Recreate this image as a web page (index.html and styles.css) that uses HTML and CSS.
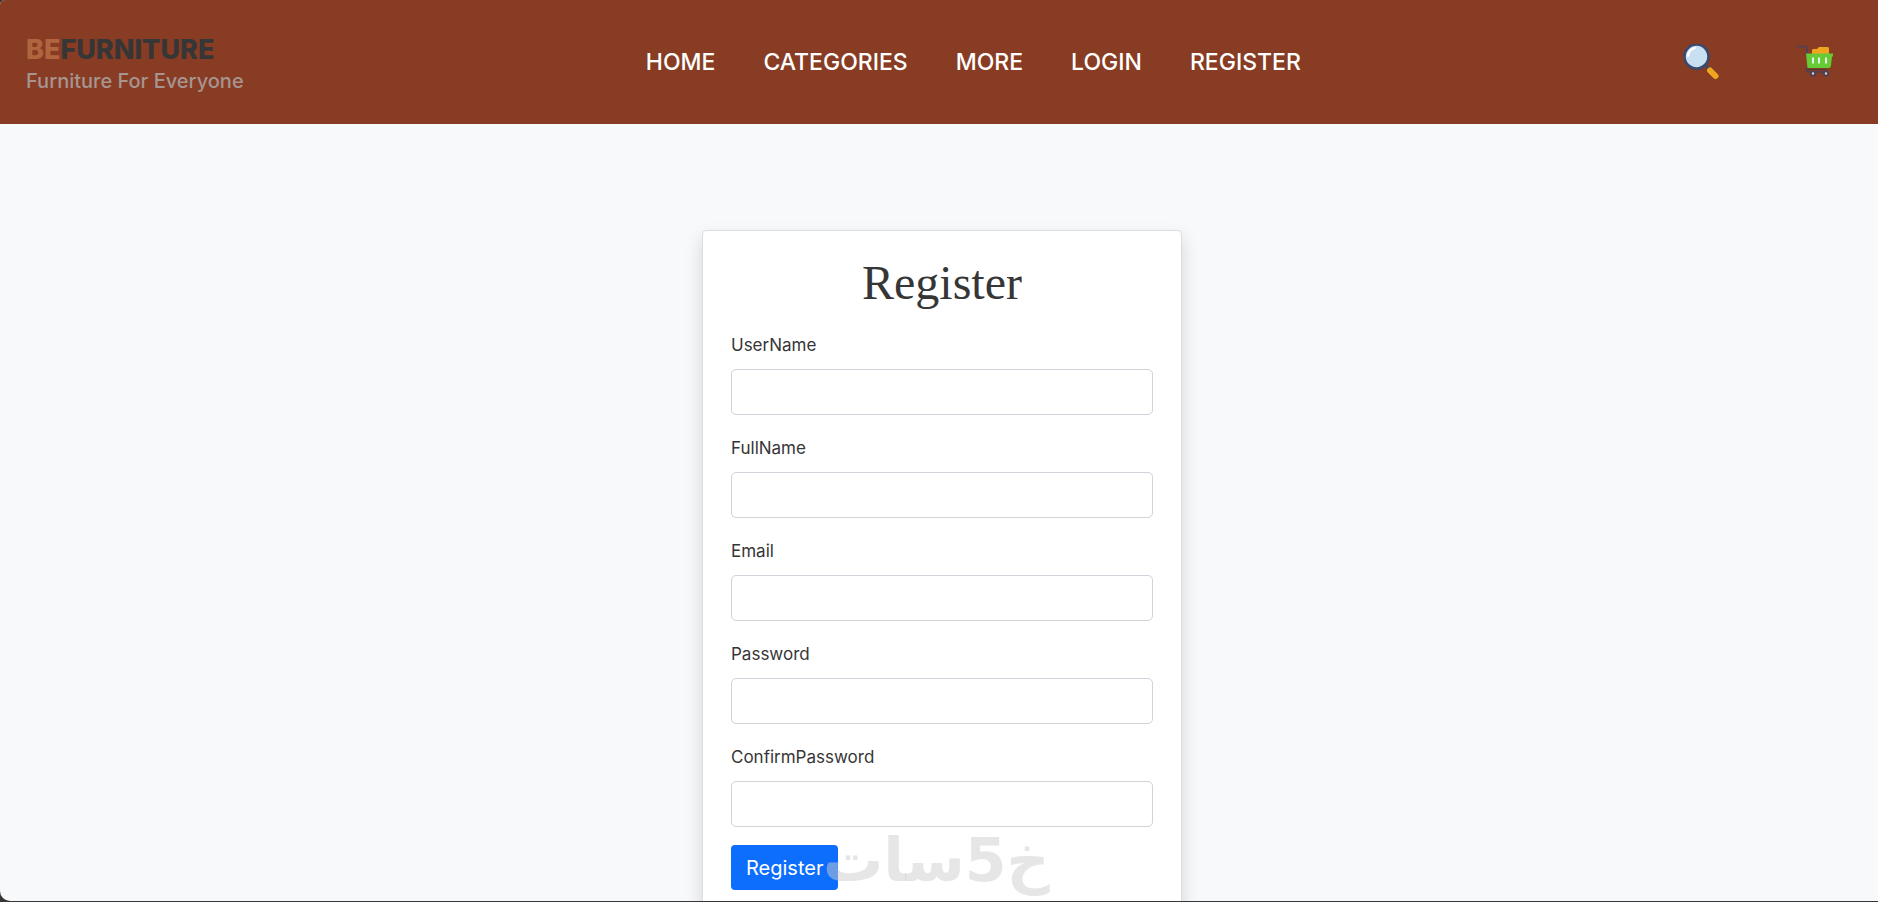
FILE: index.html
```html
<!DOCTYPE html>
<html lang="en">
<head>
  <meta charset="UTF-8">
  <meta name="viewport" content="width=device-width, initial-scale=1.0">
  <title>BEFURNITURE - Register</title>
  <link rel="stylesheet" href="styles.css">
</head>
<body>

<div class="page">
  <header class="header">
    <a class="brand" href="#">
      <span class="brand-name"><span class="brand-be">BE</span>FURNITURE</span>
      <span class="brand-tagline">Furniture For Everyone</span>
    </a>

    <nav class="menu">
      <a href="#">HOME</a>
      <a href="#">CATEGORIES</a>
      <a href="#">MORE</a>
      <a href="#">LOGIN</a>
      <a href="#">REGISTER</a>
    </nav>

    <div class="header-icons">
      <button type="button" class="icon-btn" aria-label="Search">
        <svg width="36" height="36" viewBox="0 0 36 36">
          <path d="M22 21l4 4" stroke="#3b4a6b" stroke-width="3"/>
          <path d="M27 26.500l5.500 5.500" stroke="#f0a51f" stroke-width="6" stroke-linecap="round"/>
          <circle cx="13.500" cy="12.500" r="12" fill="#c9dff2" stroke="#3b4a6b" stroke-width="2.600"/>
          <path d="M5 12a9 9 0 0 1 7-8" fill="none" stroke="#fff" stroke-width="2.200" stroke-linecap="round"/>
        </svg>
      </button>
      <button type="button" class="icon-btn" aria-label="Cart">
        <svg width="36" height="36" viewBox="0 0 36 36">
          <path d="M0 2.500h7.500q2 0 2.300 2V10M9.500 24v2q0 2 2.500 2h8" fill="none" stroke="#45455c" stroke-width="1.600"/>
          <path d="M15 10V6l1-1h4l2-2h9l1 1v6z" fill="#f0a51f"/>
          <path d="M9 9.500h27v3h-1l-1 9q-.3 2.500-2.500 2.500H10.500z" fill="#65cc35"/>
          <path d="M16 13.500v6M22 13.500v6M29 13.500v6" stroke="#e8f0e8" stroke-width="2"/>
          <path d="M10 25.500h20" stroke="#5c392f" stroke-width="1.500"/>
          <path d="M18 28h12" stroke="#57404a" stroke-width="2"/>
          <circle cx="16" cy="29.500" r="2.200" fill="#d9d4dc" stroke="#50404f" stroke-width="2"/>
          <circle cx="29" cy="29.500" r="2.200" fill="#d9d4dc" stroke="#50404f" stroke-width="2"/>
        </svg>
      </button>
    </div>
  </header>

  <main class="content">
    <div class="card">
      <h1 class="title">Register</h1>
      <form>
        <div class="field">
          <label for="userName">UserName</label>
          <input type="text" id="userName">
        </div>
        <div class="field">
          <label for="fullName">FullName</label>
          <input type="text" id="fullName">
        </div>
        <div class="field">
          <label for="email">Email</label>
          <input type="email" id="email">
        </div>
        <div class="field">
          <label for="password">Password</label>
          <input type="password" id="password">
        </div>
        <div class="field">
          <label for="confirmPassword">ConfirmPassword</label>
          <input type="password" id="confirmPassword">
        </div>
        <button type="submit" class="register-btn">Register</button>
      </form>
    </div>
  </main>

  <div class="watermark" lang="ar" dir="rtl">خ5سات</div>
</div>

</body>
</html>
```

FILE: styles.css
```css
* {
  box-sizing: border-box;
}

body {
  margin: 0;
  background-color: #363636;
  color: #363636;
  font-family: Inter, "Open Sans", sans-serif;
}

.page {
  position: relative;
  height: calc(100vh - 1px);
  overflow: hidden;
  background-color: #f8f9fb;
  border-radius: 5px 0 0 10px;
}

.header {
  display: flex;
  align-items: center;
  justify-content: space-between;
  height: 124px;
  padding: 0 45px 0 26px;
  background-color: #873c23;
}

.header a {
  text-decoration: none;
}

.brand {
  display: flex;
  flex-direction: column;
  padding: 5px 20px 0 0;
  color: #363636;
}

.brand-name {
  font-size: 27px;
  font-weight: 800;
  line-height: 32px;
}

.brand-be {
  color: #b0653f;
}

.brand-tagline {
  color: #a89490;
  font-size: 20px;
  font-weight: 500;
  line-height: 30px;
}

.menu {
  display: flex;
  gap: 48px;
}

.menu a {
  color: #fff;
  font-size: 23px;
  font-weight: 500;
  line-height: 30px;
}

.header-icons {
  display: flex;
  gap: 78px;
}

.icon-btn {
  display: flex;
  padding: 0;
  border: none;
  background: none;
  cursor: pointer;
}

.content {
  display: flex;
  justify-content: center;
  padding: 106px 0 40px 6px;
}

.card {
  width: 480px;
  padding: 27px 28px;
  background-color: #fff;
  border: 1px solid #dcdddf;
  border-radius: 4px;
  box-shadow: 0 8px 18px rgba(0, 0, 0, 0.15);
}

.title {
  margin: 0 0 25px;
  font-family: "Liberation Serif", serif;
  font-size: 48px;
  font-weight: 400;
  line-height: 50px;
  text-align: center;
}

.field {
  display: flex;
  flex-direction: column;
  gap: 11px;
  margin-bottom: 21px;
}

.field:last-of-type {
  margin-bottom: 18px;
}

.field label {
  font-size: 17px;
  line-height: 25px;
}

.field input {
  width: 100%;
  height: 46px;
  padding: 8px 12px;
  border: 1px solid #ced4da;
  border-radius: 5px;
  font: inherit;
}

.register-btn {
  height: 45px;
  padding: 0 15px;
  border: none;
  border-radius: 4px;
  background-color: #0d6efd;
  color: #fff;
  font-family: inherit;
  font-size: 20px;
  cursor: pointer;
}

.watermark {
  position: absolute;
  left: 50%;
  bottom: 5px;
  margin-left: -116px;
  color: rgba(205, 205, 205, 0.5);
  font-family: "DejaVu Sans", sans-serif;
  font-size: 60px;
  font-weight: 700;
  line-height: 72px;
  pointer-events: none;
}
```
